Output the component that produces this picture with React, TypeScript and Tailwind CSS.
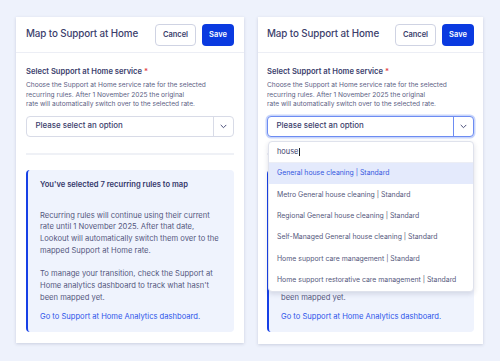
import React from "react";

const font = { fontFamily: "Inter, 'Open Sans', sans-serif" };

function Chevron() {
  return (
    <svg width="7" height="5" viewBox="0 0 7 5" fill="none">
      <path d="M1 1.2 L3.5 3.7 L6 1.2" stroke="#4b4f7a" strokeWidth="1" strokeLinecap="round" strokeLinejoin="round" />
    </svg>
  );
}

function Header({ px }: { px: string }) {
  return (
    <div className={"h-[36px] flex items-center justify-between border-b border-[#eceef5] " + px}>
      <div className="text-[9.8px] font-medium text-[#3b3e6c] tracking-[-0.1px]">Map to Support at Home</div>
      <div className="flex items-center gap-[6px]">
        <button className="w-[41px] h-[22px] rounded-[4px] border border-[#cfd3e3] bg-white text-[7.5px] font-semibold text-[#3b3e6c]">Cancel</button>
        <button className="w-[32px] h-[22px] rounded-[4px] bg-[#0a3ae0] text-[7.5px] font-semibold text-white">Save</button>
      </div>
    </div>
  );
}

function Select({ focused }: { focused?: boolean }) {
  return (
    <div
      className={
        focused
          ? "mt-[6px] h-[21px] flex rounded-[4px] border-[1.5px] border-[#6d8cf2] bg-white shadow-[0_0_0_1.5px_#c9d6fb]"
          : "mt-[6px] h-[21px] flex rounded-[4px] border border-[#d8dbe7] bg-white"
      }
    >
      <div className="flex-1 flex items-center pl-[8.5px] text-[7.9px] font-medium text-[#3b3e6c]">Please select an option</div>
      <div className={focused ? "w-[20px] flex items-center justify-center border-l-[1.5px] border-[#6d8cf2]" : "w-[20px] flex items-center justify-center border-l border-[#d8dbe7]"}>
        <Chevron />
      </div>
    </div>
  );
}

function Body({ focused }: { focused?: boolean }) {
  return (
    <div className="pt-[14px]">
      <div className="text-[7.6px] font-semibold text-[#3b3e6c] leading-[10px]">
        Select Support at Home service <span className="text-[#e5484d]">*</span>
      </div>
      <div className="mt-[4px] text-[6.6px] leading-[9.5px] text-[#5b5e83]">
        Choose the Support at Home service rate for the selected
        <br />
        recurring rules. After 1 November 2025 the original
        <br />
        rate will automatically switch over to the selected rate.
      </div>
      <Select focused={focused} />
      <div className="mt-[16px] h-[2px] bg-[#eff1f6]" />
      <div className="mt-[15px] h-[162px] rounded-[4px] border-l-2 border-[#1740e6] bg-[#eff3fd] pl-[12px] pr-[10px] pt-[9px]">
        <div className="text-[7.6px] font-semibold leading-[11px] text-[#34376a]">You've selected 7 recurring rules to map</div>
        <div className="mt-[20px] text-[7.6px] leading-[11.7px] text-[#55587d]">
          Recurring rules will continue using their current
          <br />
          rate until 1 November 2025. After that date,
          <br />
          Lookout will automatically switch them over to the
          <br />
          mapped Support at Home rate.
        </div>
        <div className="mt-[12px] text-[7.6px] leading-[11.7px] text-[#55587d]">
          To manage your transition, check the Support at
          <br />
          Home analytics dashboard to track what hasn't
          <br />
          been mapped yet.
        </div>
        <div className="mt-[8px] text-[7.6px] leading-[11.7px] text-[#2d55ea]">Go to Support at Home Analytics dashboard.</div>
      </div>
    </div>
  );
}

const options = [
  "General house cleaning | Standard",
  "Metro General house cleaning | Standard",
  "Regional General house cleaning | Standard",
  "Self-Managed General house cleaning | Standard",
  "Home support care management | Standard",
  "Home support restorative care management | Standard",
];

function Dropdown() {
  return (
    <div className="absolute left-[10px] right-[9px] top-[124px] rounded-[4px] border border-[#dfe2ec] bg-white shadow-[0_2px_5px_rgba(40,50,90,0.15)] overflow-hidden">
      <div className="h-[21px] flex items-center pl-[8px] text-[7.4px] text-[#3b3e6c] border-b border-[#eceef5]">
        house<span className="inline-block w-[0.8px] h-[8px] bg-[#222] ml-[0.3px]" />
      </div>
      {options.map((o, i) => (
        <div
          key={o}
          className={
            i === 0
              ? "h-[21.33px] flex items-center pl-[8px] whitespace-nowrap text-[6.9px] bg-[#e4eafc] text-[#3658e0]"
              : "h-[21.33px] flex items-center pl-[8px] whitespace-nowrap text-[6.9px] text-[#55587d]"
          }
        >
          {o}
        </div>
      ))}
    </div>
  );
}

export default function App() {
  return (
    <div style={font} className="w-[500px] h-[361px] bg-[#eef2fc] flex gap-[14px] pl-[16px] pt-[17px]">
      <div className="w-[228px] h-[326px] bg-white shadow-[0_1px_3px_rgba(40,50,90,0.18)]">
        <Header px="px-[10px]" />
        <div className="px-[10px]">
          <Body />
        </div>
      </div>
      <div className="relative w-[225px] h-[327px] bg-white shadow-[0_1px_3px_rgba(40,50,90,0.18)]">
        <Header px="px-[9px]" />
        <div className="px-[9px]">
          <Body focused />
        </div>
        <Dropdown />
      </div>
    </div>
  );
}
